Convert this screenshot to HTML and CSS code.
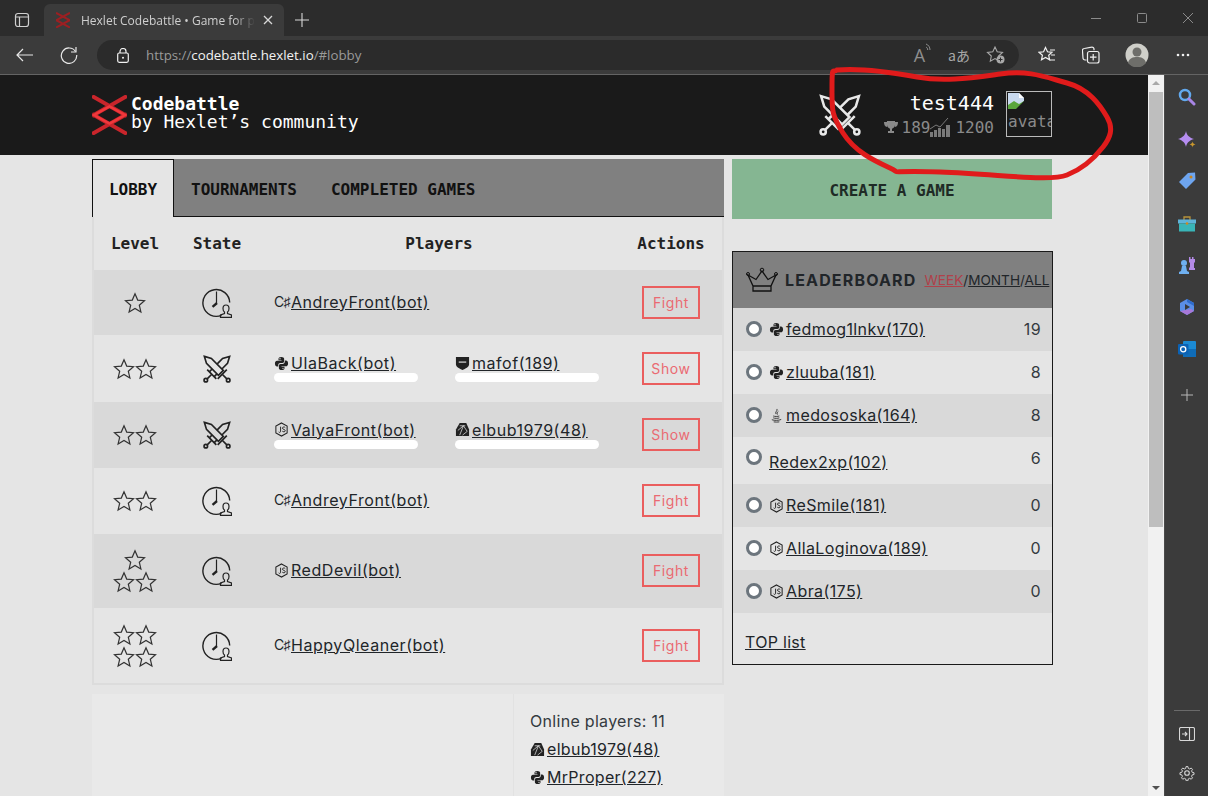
FILE: index.html
```html
<!DOCTYPE html>
<html lang="en">
<head>
<meta charset="utf-8">
<title>Hexlet Codebattle</title>
<link rel="stylesheet" href="styles.css">
</head>
<body>
<svg class="defs" width="0" height="0">
  <symbol id="star" viewBox="0 0 22 22"><path d="M11 1.800l2.700 6.300 6.800.6-5.200 4.500 1.600 6.700L11 16.400l-5.900 3.500 1.600-6.700L1.500 8.700l6.800-.6z" fill="none" stroke="currentColor" stroke-width="1.200"/></symbol>
  <symbol id="clock" viewBox="0 0 30 30"><path d="M19.500 27.300A13.400 13.400 0 1 1 27.700 14.500" fill="none" stroke="currentColor" stroke-width="1.400"/><path d="M14.500 3.500v11.500" stroke="currentColor" stroke-width="1.200"/><path d="M15 15l-4.500 3.800" stroke="currentColor" stroke-width="2.400"/><path d="M18.500 29.400v-2.400l4-1.500v-1.500c-1-.5-1.500-2-1.500-3.500 0-2 1-3.500 3-3.500s3 1.500 3 3.500c0 1.500-.5 3-1.500 3.500v1.500l4 1.500v2.400z" fill="none" stroke="currentColor" stroke-width="1.200"/></symbol>
  <symbol id="swords" viewBox="0 0 40 40"><g fill="none" stroke="currentColor" stroke-width="2.400"><path d="M2 2l10 3 17 17-7 7L5 12z"/><path d="M21 34l13-13M27.500 27.500L34 34"/><circle cx="36" cy="36" r="2.500"/><path d="M20 13l8-8 10-3-3 10-8 8M13 20l-4 4M20 27l-4 4"/><path d="M6 21l13 13M12.500 27.500L6 34"/><circle cx="4" cy="36" r="2.500"/></g></symbol>
  <symbol id="python" viewBox="0 0 16 16"><g fill="currentColor" fill-rule="evenodd"><path id="snake" d="M8 1C5.500 1 4.800 2 4.800 3v1.500H8V5H3.200C2 5 1 6 1 8s1 3.300 2.200 3.300h1.300V9.800c0-1.300 1-2.300 2.300-2.300H9c1 0 1.800-.8 1.800-1.800V3C10.800 1.800 9.500 1 8 1zM6.400 2.200a.7.7 0 1 1 0 1.400.7.7 0 0 1 0-1.400z"/><use href="#snake" transform="rotate(180 8 8)"/></g></symbol>
  <symbol id="js" viewBox="0 0 16 16"><path d="M8 1l6 3.400v7.200L8 15l-6-3.400V4.400z" fill="none" stroke="currentColor" stroke-width="1.100"/><path d="M7 5v5c0 1.300-1.500 1.300-2 .6M12 6c-.6-1-3-1-3 .6 0 1.700 3 .9 3 2.700 0 1.500-2.500 1.500-3.200.4" fill="none" stroke="currentColor" stroke-width="1"/></symbol>
  <symbol id="gem" viewBox="0 0 16 16"><path d="M5 1h7l3 7v7H1V8z" fill="currentColor"/><path d="M5 4l6 0M3 9l6-5 4 6M5 14l4-10M8 14l5-4" stroke="#ddd" stroke-width=".8" fill="none"/></symbol>
  <symbol id="shield" viewBox="0 0 16 16"><path d="M1 1h14v8c0 2.500-4 4.500-7 6-3-1.500-7-3.500-7-6z" fill="currentColor"/><path d="M4 6.500h8" stroke="#ccc" stroke-width="1.400"/></symbol>
  <symbol id="java" viewBox="0 0 16 16"><g fill="none" stroke="currentColor" stroke-width=".9"><path d="M8.500 1c1 2-2.500 3-1 5.500M10 3.500c-1.500 1-1.500 2-1 3.500"/><path d="M4.500 8.500c1.500.7 5 .7 6.500 0M4.500 10.500c1.500.7 5 .7 6.500 0M3 12.500c3 1 7 1 10-.3M5 14.800c2 .3 4 .3 6 0"/></g></symbol>
</svg>

<div class="window">
  <div class="tabstrip">
    <div class="tabs-btn"><svg width="16" height="16" viewBox="0 0 16 16"><rect x="1.500" y="1.500" width="13" height="13" rx="2.500" fill="none" stroke="#d0d0d0" stroke-width="1.200"/><path d="M1.500 5h13M5.500 5v9.500" stroke="#d0d0d0" stroke-width="1.200"/></svg></div>
    <div class="tab">
      <svg class="favicon" width="14" height="16" viewBox="0 0 35 40"><path d="M0 2l35 19M35 2L0 21M0 20l35 19M35 20L0 39" stroke="#9c1f22" stroke-width="5"/></svg>
      <span class="tab-title">Hexlet Codebattle • Game for programmers</span>
      <svg width="10" height="10" viewBox="0 0 10 10"><path d="M1 1l8 8M9 1l-8 8" stroke="#d8d8d8" stroke-width="1.300"/></svg>
    </div>
    <svg class="newtab" width="14" height="14" viewBox="0 0 14 14"><path d="M7 0v14M0 7h14" stroke="#d8d8d8" stroke-width="1.100"/></svg>
    <div class="winctl">
      <svg width="10" height="10" viewBox="0 0 10 10"><path d="M0 5.500h10" stroke="#8b8b8b"/></svg>
      <svg width="10" height="10" viewBox="0 0 10 10"><rect x=".5" y=".5" width="9" height="9" rx="1" fill="none" stroke="#8b8b8b"/></svg>
      <svg width="10" height="10" viewBox="0 0 10 10"><path d="M0 0l10 10M10 0L0 10" stroke="#8b8b8b"/></svg>
    </div>
  </div>

  <div class="toolbar">
    <svg class="tb-back" width="18" height="14" viewBox="0 0 18 14"><path d="M17 7H1M7 1L1 7l6 6" fill="none" stroke="#e8e8e8" stroke-width="1.200"/></svg>
    <svg class="tb-reload" width="18" height="18" viewBox="0 0 18 18"><path d="M15.500 5.500A7.700 7.700 0 1 0 16.700 9" fill="none" stroke="#e8e8e8" stroke-width="1.200"/><path d="M16 1v5h-5" fill="none" stroke="#e8e8e8" stroke-width="1.200"/></svg>
    <div class="addressbar">
      <svg class="lock" width="12" height="15" viewBox="0 0 12 15"><rect x=".7" y="5" width="10.600" height="9.300" rx="1.500" fill="none" stroke="#f0f0f0" stroke-width="1.200"/><path d="M3 5V3.500a3 3 0 0 1 6 0V5" fill="none" stroke="#f0f0f0" stroke-width="1.200"/><circle cx="6" cy="9.700" r="1" fill="#f0f0f0"/></svg>
      <span class="url"><span class="dim">https://</span>codebattle.hexlet.io<span class="dim">/#lobby</span></span>
      <div class="ab-icons">
        <span class="read">A<svg width="7" height="9" viewBox="0 0 7 9"><path d="M1 1c2.500 1 4 3 4 6M1 4c1 .5 1.700 1.300 1.700 3" fill="none" stroke="#8e8e8e"/></svg></span>
        <span class="trans">aあ</span>
        <svg width="20" height="20" viewBox="0 0 20 20"><path d="M9 2l2.200 4.800 5.300.6-3.900 3.600 1 5.200L9 13.600l-4.700 2.600 1-5.200L1.500 7.400l5.300-.6z" fill="none" stroke="#a8a8a8" stroke-width="1.100"/><circle cx="14.500" cy="14.500" r="4" fill="#a8a8a8"/><path d="M14.500 12.500v4M12.500 14.500h4" stroke="#2b2b2b"/></svg>
      </div>
    </div>
    <div class="tb-right">
      <svg width="18" height="18" viewBox="0 0 18 18"><path d="M7.500 1.500l2 4.300 4.500.5-3.300 3 .9 4.500-4.100-2.300-4 2.300.9-4.500L1 6.300l4.600-.5z" fill="none" stroke="#f0f0f0" stroke-width="1.200"/><path d="M12 4h5M13 9h4M11.500 14h5.500" stroke="#f0f0f0" stroke-width="1.200"/></svg>
      <svg width="18" height="18" viewBox="0 0 18 18"><rect x="5.500" y="5.500" width="11.500" height="11.500" rx="2" fill="none" stroke="#f0f0f0" stroke-width="1.200"/><path d="M4.500 14H3a2 2 0 0 1-2-2l-.5-7a2 2 0 0 1 2-2.500l7-1.300a2 2 0 0 1 2.500 2v1" fill="none" stroke="#f0f0f0" stroke-width="1.200"/><path d="M11.200 8v6.500M8 11.200h6.500" stroke="#f0f0f0" stroke-width="1.200"/></svg>
      <svg class="profile" width="24" height="24" viewBox="0 0 24 24"><circle cx="12" cy="12" r="11.500" fill="#cfcfc9"/><circle cx="12" cy="9" r="4.500" fill="#6e6e6a"/><path d="M3 20c1-5 5-6 9-6s8 1 9 6a11.500 11.500 0 0 1-18 0z" fill="#6e6e6a"/></svg>
      <svg width="14" height="4" viewBox="0 0 14 4"><circle cx="2" cy="2" r="1.300" fill="#f0f0f0"/><circle cx="7" cy="2" r="1.300" fill="#f0f0f0"/><circle cx="12" cy="2" r="1.300" fill="#f0f0f0"/></svg>
    </div>
  </div>

  <div class="browser-body">
    <div class="viewport">
      <header class="site-header">
        <svg class="logo" width="35" height="40" viewBox="0 0 35 40"><path d="M0 1l35 20M35 1L0 21M0 19l35 20M35 19L0 39" stroke="#c9252b" stroke-width="4" fill="none"/><path d="M2 20l15.500-8.500L33 20l-15.500 8.500z" fill="none" stroke="#f0383c" stroke-width="2.500"/></svg>
        <div class="brand"><strong>Codebattle</strong><span>by Hexlet’s community</span></div>
        <svg class="hdr-swords"><use href="#swords"/></svg>
        <div class="user">
          <div class="uname">test444</div>
          <div class="ustats">
            <svg width="14" height="14" viewBox="0 0 14 14"><path d="M3 1h8v4c0 2-2 3.500-3 3.700V11h2v2H4v-2h2V8.700C5 8.500 3 7 3 5zM3 2H0c0 3 1 4.500 3 5M11 2h3c0 3-1 4.500-3 5" fill="#8a8a8a"/></svg>
            <span>189</span>
            <svg width="21" height="20" viewBox="0 0 21 20"><path d="M0 20v-5h3v5zM4 20v-7h3v7zM8 20v-9h3v9zM12 20v-8h3v8zM16 20V8h4v12z" fill="#7a7a7a"/><path d="M0 12l6-4 4 2 8-9" fill="none" stroke="#7a7a7a"/></svg>
            <span class="urating">1200</span>
          </div>
        </div>
        <div class="avatar">
          <svg width="16" height="16" viewBox="0 0 16 16"><path d="M0 0h11l5 5v11H0z" fill="#c9d9ee"/><path d="M0 16v-4l6-4 5 3 5-3v8z" fill="#5aa53c"/><path d="M11 0l5 5h-5z" fill="#fff"/><path d="M8 16l8-8v8z" fill="#1a1a1a"/></svg>
          <span>avatar</span>
        </div>
      </header>

      <main class="content">
        <div class="left">
          <nav class="tabbar">
            <a class="navtab active">LOBBY</a>
            <a class="navtab">TOURNAMENTS</a>
            <a class="navtab">COMPLETED GAMES</a>
          </nav>
          <div class="games">
            <div class="row head"><span>Level</span><span>State</span><span>Players</span><span>Actions</span></div>

            <div class="row odd h65">
              <div class="stars"><svg class="star"><use href="#star"/></svg></div>
              <svg class="state"><use href="#clock"/></svg>
              <div class="players"><div class="player"><span class="csharp">C♯</span><a>AndreyFront(bot)</a></div></div>
              <button class="act">Fight</button>
            </div>

            <div class="row h67">
              <div class="stars"><svg class="star"><use href="#star"/></svg><svg class="star"><use href="#star"/></svg></div>
              <svg class="state sw"><use href="#swords"/></svg>
              <div class="players">
                <div class="player"><svg class="lang"><use href="#python"/></svg><a>UlaBack(bot)</a><i class="bar"></i></div>
                <div class="player"><svg class="lang"><use href="#shield"/></svg><a>mafof(189)</a><i class="bar"></i></div>
              </div>
              <button class="act">Show</button>
            </div>

            <div class="row odd h66">
              <div class="stars"><svg class="star"><use href="#star"/></svg><svg class="star"><use href="#star"/></svg></div>
              <svg class="state sw"><use href="#swords"/></svg>
              <div class="players">
                <div class="player"><svg class="lang"><use href="#js"/></svg><a>ValyaFront(bot)</a><i class="bar"></i></div>
                <div class="player"><svg class="lang"><use href="#gem"/></svg><a>elbub1979(48)</a><i class="bar"></i></div>
              </div>
              <button class="act">Show</button>
            </div>

            <div class="row h66">
              <div class="stars"><svg class="star"><use href="#star"/></svg><svg class="star"><use href="#star"/></svg></div>
              <svg class="state"><use href="#clock"/></svg>
              <div class="players"><div class="player"><span class="csharp">C♯</span><a>AndreyFront(bot)</a></div></div>
              <button class="act">Fight</button>
            </div>

            <div class="row odd h74">
              <div class="stars three"><svg class="star"><use href="#star"/></svg><svg class="star"><use href="#star"/></svg><svg class="star"><use href="#star"/></svg></div>
              <svg class="state"><use href="#clock"/></svg>
              <div class="players"><div class="player"><svg class="lang"><use href="#js"/></svg><a>RedDevil(bot)</a></div></div>
              <button class="act">Fight</button>
            </div>

            <div class="row h75">
              <div class="stars"><svg class="star"><use href="#star"/></svg><svg class="star"><use href="#star"/></svg><svg class="star"><use href="#star"/></svg><svg class="star"><use href="#star"/></svg></div>
              <svg class="state"><use href="#clock"/></svg>
              <div class="players"><div class="player"><span class="csharp">C♯</span><a>HappyQleaner(bot)</a></div></div>
              <button class="act">Fight</button>
            </div>
          </div>

          <section class="bottom">
            <div class="chat"></div>
            <aside class="online">
              <p>Online players: 11</p>
              <div class="on-player"><svg class="lang"><use href="#gem"/></svg><a>elbub1979(48)</a></div>
              <div class="on-player"><svg class="lang"><use href="#python"/></svg><a>MrProper(227)</a></div>
            </aside>
          </section>
        </div>

        <div class="right">
          <button class="create">CREATE A GAME</button>
          <section class="board">
            <div class="board-head">
              <svg class="crown" width="32" height="26" viewBox="0 0 32 26"><path d="M7 24V19L2 8l8 4.500L16 4l6 8.500L30 8l-5 11v5zM7 19h18" fill="none" stroke="#111" stroke-width="1.300"/><circle cx="2" cy="7" r="1.500" fill="none" stroke="#111"/><circle cx="16" cy="3" r="1.800" fill="none" stroke="#111"/><circle cx="30" cy="7" r="1.500" fill="none" stroke="#111"/></svg>
              <h2>LEADERBOARD</h2>
              <div class="periods"><a class="cur">WEEK</a>/<a>MONTH</a>/<a>ALL</a></div>
            </div>
            <div class="lrow odd"><i class="radio"></i><svg class="lang"><use href="#python"/></svg><a>fedmog1lnkv(170)</a><b>19</b></div>
            <div class="lrow"><i class="radio"></i><svg class="lang"><use href="#python"/></svg><a>zluuba(181)</a><b>8</b></div>
            <div class="lrow odd"><i class="radio"></i><svg class="lang"><use href="#java"/></svg><a>medososka(164)</a><b>8</b></div>
            <div class="lrow tall"><i class="radio"></i><a>Redex2xp(102)</a><b>6</b></div>
            <div class="lrow odd"><i class="radio"></i><svg class="lang"><use href="#js"/></svg><a>ReSmile(181)</a><b>0</b></div>
            <div class="lrow"><i class="radio"></i><svg class="lang"><use href="#js"/></svg><a>AllaLoginova(189)</a><b>0</b></div>
            <div class="lrow odd"><i class="radio"></i><svg class="lang"><use href="#js"/></svg><a>Abra(175)</a><b>0</b></div>
            <div class="board-foot"><a>TOP list</a></div>
          </section>
        </div>
      </main>
    </div>

    <div class="scrollbar">
      <svg width="16" height="16" viewBox="0 0 16 16"><path d="M4 10l4-4 4 4z" fill="#a8a8a8"/></svg>
      <div class="thumb"></div>
      <div class="sb-end"><svg width="16" height="16" viewBox="0 0 16 16"><path d="M4 6l4 4 4-4z" fill="#505050"/></svg></div>
    </div>

    <aside class="sidebar">
      <svg width="18" height="18" viewBox="0 0 18 18"><circle cx="7" cy="7" r="5" fill="none" stroke="#62a9ee" stroke-width="2.500"/><path d="M11 11l5 5" stroke="#a986e6" stroke-width="3" stroke-linecap="round"/></svg>
      <svg width="18" height="18" viewBox="0 0 18 18"><path d="M8 0c.8 4 3 6.500 8 8-5 1.500-7.200 4-8 8-.8-4-3-6.500-8-8 5-1.500 7.200-4 8-8z" fill="#b58df0"/><path d="M14.500 10.500c.3 1.600.8 2.200 3 3-2.200.6-2.700 1.200-3 3-.3-1.800-.8-2.400-3-3 2.200-.8 2.700-1.400 3-3z" fill="#c8962d"/></svg>
      <svg width="18" height="18" viewBox="0 0 18 18"><path d="M10 1l7-.5.500 7L8 17 1 10z" fill="#6ea5ef"/><circle cx="13" cy="5" r="1.500" fill="#c8841c"/></svg>
      <svg width="18" height="18" viewBox="0 0 18 18"><path d="M6 5V2h6v3" fill="none" stroke="#b7923a" stroke-width="1.300"/><rect y="4.500" width="18" height="4" fill="#5fb3d9"/><rect x="1" y="8.500" width="16" height="8" fill="#39b5b8"/><circle cx="9" cy="8.500" r="1.300" fill="#d08a20"/></svg>
      <svg width="18" height="18" viewBox="0 0 18 18"><path d="M11 1h1.500v2H14V1h1.500v2H17V1v5l-1 1v5h1v2h-6v-2l1-1V7l-1-1z" fill="#b38ae6"/><circle cx="6" cy="7" r="3" fill="#6fb0f0"/><path d="M4 10h4l1 5 2 1v2H1v-2l2-1z" fill="#6fb0f0"/></svg>
      <svg width="18" height="18" viewBox="0 0 18 18"><path d="M9 1l7 4v8l-7 4-7-4V5z" fill="#5a8ee6"/><path d="M9 1l7 4v3L9 4z" fill="#2f6ccc"/><path d="M2 13l7 4 7-4-3-2z" fill="#a878d8"/><path d="M7 6l5 3-5 3z" fill="#3b3b3b"/></svg>
      <svg width="18" height="18" viewBox="0 0 18 18"><rect x="5" y="1" width="13" height="16" rx="1" fill="#1b8ad4"/><path d="M5 9h13v8H5z" fill="#0f6cb8"/><rect y="4" width="10.500" height="10.500" rx="1" fill="#0b62b5"/><circle cx="5.200" cy="9.200" r="2.600" fill="none" stroke="#fff" stroke-width="1.300"/></svg>
      <svg class="plus" width="12" height="12" viewBox="0 0 12 12"><path d="M6 0v12M0 6h12" stroke="#b8b8b8"/></svg>
      <div class="side-end">
        <div class="side-line"></div>
        <svg width="16" height="14" viewBox="0 0 16 14"><rect x=".5" y=".5" width="15" height="13" rx="1.500" fill="none" stroke="#d8d8d8" stroke-width="1.100"/><path d="M10.500 1v12M3 7h5M6 5l2 2-2 2" fill="none" stroke="#d8d8d8" stroke-width="1.100"/></svg>
        <svg width="16" height="16" viewBox="0 0 16 16"><circle cx="8" cy="8" r="2.300" fill="none" stroke="#d8d8d8" stroke-width="1.100"/><path d="M7 .8h2l.4 2 1.500.7 1.800-1 1.400 1.500-1 1.700.7 1.600 2 .4v2l-2 .4-.7 1.600 1 1.700-1.400 1.500-1.800-1-1.500.7-.4 2H7l-.4-2-1.500-.7-1.800 1-1.400-1.500 1-1.700-.7-1.600-2-.4v-2l2-.4.700-1.600-1-1.700 1.400-1.500 1.800 1 1.500-.7z" fill="none" stroke="#d8d8d8" stroke-width="1.100" transform="translate(.8 .8) scale(.9)"/></svg>
      </div>
    </aside>
  </div>

  <svg class="scribble" width="300" height="130" viewBox="820 60 300 130"><path d="M837 70C860 68 890 72 917 77S970 78 1000 74 1045 77 1067 83 1100 105 1107 117 1110 138 1103 147 1085 168 1067 175 1000 174 940 172 905 175 890 168 855 152 843 133 832 110 832 87 833 74 837 70z" fill="none" stroke="#e01b1b" stroke-width="5"/></svg>
</div>
</body>
</html>
```

FILE: styles.css
```css
* { box-sizing: border-box; }
html, body { margin: 0; height: 100%; overflow: hidden; }
body { font-family: "Inter", "Liberation Sans", sans-serif; color: #212529; background: #3b3b3b; }
.defs { position: absolute; }
a { color: inherit; text-decoration: underline; }
svg { display: block; flex: none; }

.window { position: relative; width: 1208px; height: 796px; display: flex; flex-direction: column; }
.scribble { position: absolute; left: 820px; top: 60px; pointer-events: none; }

/* browser chrome */
.tabstrip { height: 36px; background: #2c2c2c; display: flex; align-items: flex-end; flex: none; }
.tabs-btn { width: 44px; height: 32px; display: flex; align-items: center; justify-content: center; }
.tab { width: 240px; height: 32px; background: #3b3b3b; border-radius: 6px 6px 0 0; display: flex; align-items: center; padding: 0 11px 0 12px; color: #cfcfcf; font: 12px "Open Sans", sans-serif; }
.favicon { margin-right: 11px; }
.tab-title { flex: 1; min-width: 0; white-space: nowrap; overflow: hidden; margin-right: 8px; -webkit-mask-image: linear-gradient(90deg, #000 88%, transparent); mask-image: linear-gradient(90deg, #000 88%, transparent); }
.newtab { margin: 0 0 9px 11px; }
.winctl { margin-left: auto; height: 36px; display: flex; align-items: center; padding-right: 15px; gap: 36px; }

.toolbar { height: 39px; background: #3b3b3b; border-bottom: 1px solid #646464; display: flex; align-items: center; padding: 0 0 0 16px; flex: none; }
.tb-reload { margin-left: 26px; }
.addressbar { margin-left: 19px; width: 922px; height: 30px; background: #2b2b2b; border-radius: 15px; display: flex; align-items: center; padding: 0 13px 0 20px; }
.lock { margin-right: 17px; }
.url { font: 13.3px "Open Sans", sans-serif; color: #f2f2f2; }
.dim { color: #9a9a9a; }
.ab-icons { margin-left: auto; display: flex; align-items: center; gap: 16px; color: #a0a0a0; }
.read { font: 18px "Open Sans", sans-serif; display: flex; align-items: flex-start; color: #8e8e8e; }
.trans { font: 14px "Noto Sans CJK JP", sans-serif; color: #a8a8a8; }
.tb-right { display: flex; align-items: center; margin-left: 19px; }
.tb-right svg:nth-child(2) { margin-left: 26px; }
.tb-right .profile { margin-left: 25px; }
.tb-right svg:nth-child(4) { margin-left: 27px; }

.browser-body { flex: 1; min-height: 0; display: flex; }

/* page */
.viewport { width: 1148px; background: #e5e5e5; overflow: hidden; flex: none; }
.site-header { height: 80px; background: #1a1a1a; display: flex; align-items: center; padding: 0 96px 0 92px; color: #fff; font-family: "DejaVu Sans Mono", monospace; }
.logo { margin: 0 4px 0 0; }
.brand { display: flex; flex-direction: column; font-size: 18px; line-height: 18px; margin-bottom: 4px; }
.hdr-swords { width: 44px; height: 42px; margin-left: auto; color: #e8e8e8; }
.user { width: 132px; margin: 0 12px 2.5px 0; text-align: right; }
.uname { font-size: 20px; line-height: 24px; margin-bottom: 2.5px; }
.ustats { display: flex; justify-content: flex-end; align-items: flex-end; color: #8a8a8a; font-size: 16px; line-height: 19px; }
.urating { margin-left: 4px; }
.ustats svg:first-child { margin: 0 4px 3px 0; }
.avatar { width: 46px; height: 46px; margin-bottom: 2px; border: 1px solid #bbb; overflow: hidden; color: #8a8a8a; font-size: 16px; line-height: 20px; padding: 1px; white-space: nowrap; }
.avatar span { display: block; margin-top: 3px; }

.content { display: grid; grid-template-columns: 632px 320px; column-gap: 8px; margin: 4px 0 0 92px; align-items: start; }
.tabbar { height: 58px; background: #808080; display: flex; align-items: center; border-bottom: 1px solid #111; font: 700 16px "DejaVu Sans Mono", monospace; color: #111; }
.navtab { text-decoration: none; padding: 0 17px; height: 58px; line-height: 61px; }
.navtab.active { width: 82px; background: #e5e5e5; border: 1px solid #111; border-bottom: 0; padding: 0; text-align: center; line-height: 59px; }
.games { border: 2px solid #dcdcdc; border-top: 0; }
.row { display: grid; grid-template-columns: 82px 82px 362px 102px; align-items: center; justify-items: center; }
.row.head { height: 53px; font: 700 16px "DejaVu Sans Mono", monospace; color: #222; padding-bottom: 1px; }
.odd { background: #d9d9d9; }
.h65 { height: 65px; } .h67 { height: 67px; } .h66 { height: 66px; } .h74 { height: 74px; } .h75 { height: 75px; }
.stars { width: 44px; display: flex; flex-wrap: wrap; justify-content: center; color: #333; }
.stars.three { flex-wrap: wrap-reverse; }
.star { width: 22px; height: 22px; }
.state { width: 30px; height: 30px; color: #222; }
.state.sw { width: 28px; height: 28px; }
.players { justify-self: stretch; display: grid; grid-template-columns: 181px 181px; padding: 0 0 2px 16px; font-size: 16px; letter-spacing: .55px; }
.player { position: relative; display: flex; align-items: center; white-space: nowrap; line-height: 20px; }
.csharp { font-size: 14px; width: 17px; letter-spacing: -1px; }
.lang { width: 15px; height: 15px; margin-right: 2px; color: #222; }
.bar { position: absolute; left: 0; top: 20px; width: 144px; height: 9px; background: #fff; border-radius: 5px; }
.player:has(.bar) { margin-top: -9px; }
.act { width: 58px; height: 33px; margin-bottom: 1px; background: transparent; border: 2px solid #ea5e5e; color: #ea6a72; font: 14px "Inter", sans-serif; padding: 0; letter-spacing: .6px; }

.bottom { margin-top: 9px; height: 130px; display: grid; grid-template-columns: 422px 210px; background: #e9e9e9; }
.chat { border-right: 1px solid #e2e2e2; }
.online { padding: 17px 16px; font-size: 16px; letter-spacing: .3px; white-space: nowrap; color: #343a40; }
.online p { margin: 0 0 4px; line-height: 20px; }
.on-player { display: flex; align-items: center; height: 28px; color: #212529; }
.on-player .lang { margin-right: 2px; }

.create { width: 320px; height: 60px; background: #85b692; border: 0; font: 700 16px "DejaVu Sans Mono", monospace; color: #1f2b26; padding: 2px 0 0; }
.board { margin-top: 32px; width: 321px; border: 1px solid #1a1a1a; }
.board-head { height: 56px; background: #808080; display: flex; align-items: center; padding-left: 13px; white-space: nowrap; }
.crown { margin-right: 7px; }
.board-head h2 { margin: 0 8px 0 0; font: 700 16px "Inter", sans-serif; color: #212529; letter-spacing: 1.15px; }
.periods { font-size: 13.6px; color: #212529; }
.periods .cur { color: #b0414a; }
.lrow { height: 43px; display: flex; align-items: center; padding: 0 11px 1px 13px; font-size: 16px; letter-spacing: .4px; white-space: nowrap; }
.lrow.tall { height: 47px; }
.lrow.tall .radio { margin-top: -7px; }
.lrow.tall a { margin-top: 3px; }
.lrow.tall b { margin-top: -4px; }
.lrow b { margin-left: auto; font-weight: 400; color: #343a40; }
.radio { width: 16px; height: 16px; border-radius: 50%; background: #fff; border: 3px solid #6c757d; margin-right: 7px; flex: none; }
.board-foot { height: 51px; padding: 19px 12px 0; font-size: 16px; line-height: 20px; letter-spacing: .3px; }

/* scrollbar */
.scrollbar { width: 16px; background: #f1f1f1; display: flex; flex-direction: column; align-items: center; flex: none; }
.thumb { width: 14px; height: 435px; background: #bebebe; margin-top: 1px; }
.sb-end { margin-top: auto; }

/* sidebar */
.sidebar { width: 44px; background: #3b3b3b; border-left: 1px solid #4a4a4a; display: flex; flex-direction: column; align-items: center; padding-top: 13px; gap: 24px; flex: none; }
.sidebar > svg:nth-child(2) { margin-top: 1px; }
.sidebar > svg:nth-child(3) { margin-top: -1px; }
.sidebar > svg:nth-child(4) { margin-top: 1px; }
.sidebar > svg:nth-child(5) { margin-top: -1px; }
.sidebar > .plus { margin-top: 7px; }
.side-end { margin-top: auto; width: 100%; display: flex; flex-direction: column; align-items: center; gap: 24px; padding-bottom: 15px; }
.side-line { width: 26px; height: 1px; background: #6a6a6a; margin-bottom: -8px; }
```
